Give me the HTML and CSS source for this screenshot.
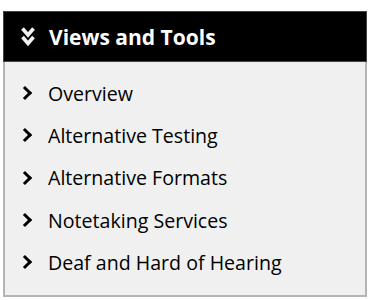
FILE: index.html
```html
<!DOCTYPE html>
<html lang="en">
<head>
    <meta charset="UTF-8">
    <title>Views and Tools</title>
    <link rel="stylesheet" href="styles.css">
</head>
<body>

<div class="panel">
    <div class="panel-head">
        <svg class="head-icon" width="14" height="22" viewBox="0 0 14 22">
            <path d="M1.5 2.5 L7 9 L12.5 2.5" fill="none" stroke="#f2f2f2" stroke-width="3.6"/>
            <path d="M1.5 11 L7 17.5 L12.5 11" fill="none" stroke="#f2f2f2" stroke-width="3.6"/>
        </svg>
        <h2>Views and Tools</h2>
    </div>

    <ul class="tools">
        <li><a href="#"><span class="chev"></span>Overview</a></li>
        <li><a href="#"><span class="chev"></span>Alternative Testing</a></li>
        <li><a href="#"><span class="chev"></span>Alternative Formats</a></li>
        <li><a href="#"><span class="chev"></span>Notetaking Services</a></li>
        <li><a href="#"><span class="chev"></span>Deaf and Hard of Hearing</a></li>
    </ul>
</div>

</body>
</html>
```

FILE: styles.css
```css
body {
    margin: 0;
    padding: 11px 3px 0 3px;
    background-color: white;
    font-family: 'Open Sans', sans-serif;
}

.panel {
    width: 364px;
    box-sizing: border-box;
    border: 2px solid #b4b4b4;
    border-top: none;
    background-color: #f0f0f0;
}

.panel-head {
    display: flex;
    align-items: center;
    height: 51px;
    margin: 0 -2px;
    padding-left: 17px;
    background-color: #000;
    border: 1px solid #444;
    box-sizing: border-box;
}

.head-icon {
    margin-right: 14px;
}

.panel-head h2 {
    margin: 0;
    color: white;
    font-size: 21px;
    font-weight: bold;
}

.tools {
    list-style: none;
    margin: 0;
    padding: 10px 0 12px 0;
}

.tools li a {
    display: flex;
    align-items: center;
    height: 42.3px;
    padding-left: 15px;
    color: #000;
    font-size: 19.6px;
    text-decoration: none;
}

.chev {
    width: 7px;
    height: 7px;
    border-top: 3px solid #000;
    border-right: 3px solid #000;
    transform: rotate(45deg);
    margin-right: 18px;
}
```
